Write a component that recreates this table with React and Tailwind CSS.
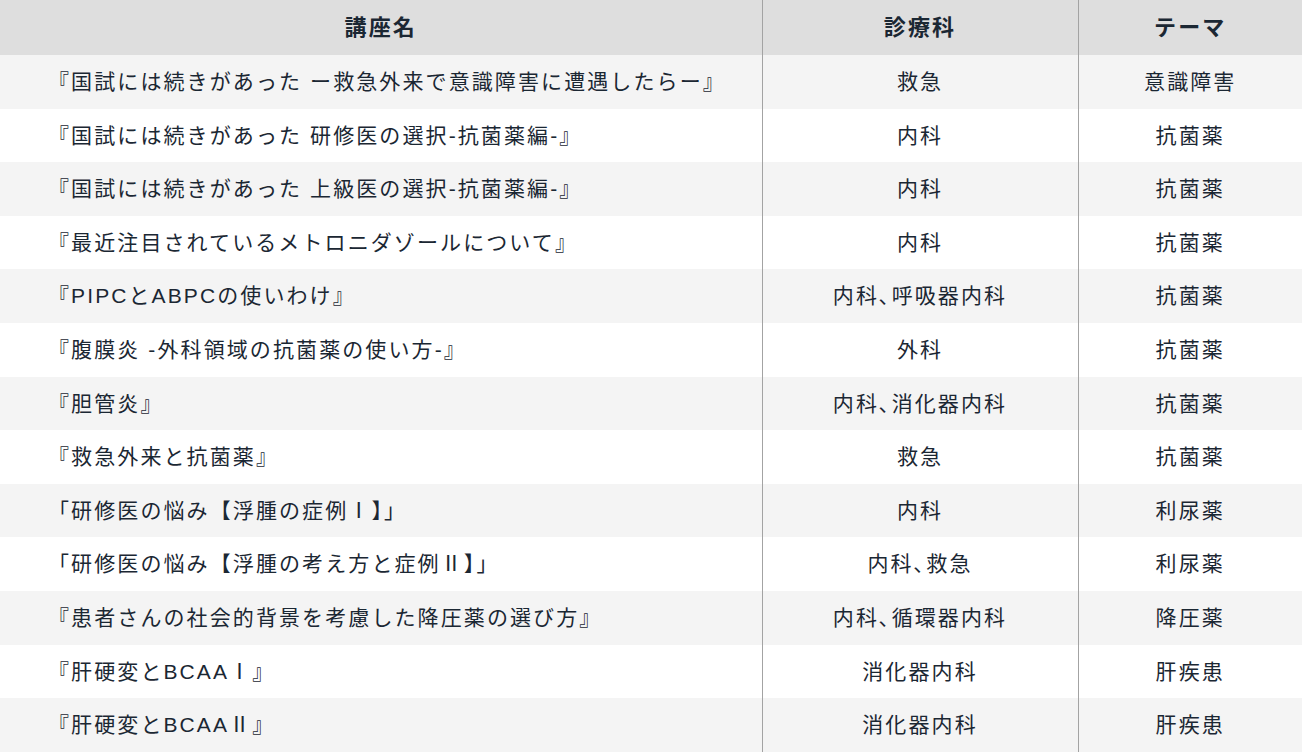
const rows = [
  ['『国試には続きがあった ー救急外来で意識障害に遭遇したらー』', '救急', '意識障害'],
  ['『国試には続きがあった 研修医の選択-抗菌薬編-』', '内科', '抗菌薬'],
  ['『国試には続きがあった 上級医の選択-抗菌薬編-』', '内科', '抗菌薬'],
  ['『最近注目されているメトロニダゾールについて』', '内科', '抗菌薬'],
  ['『PIPCとABPCの使いわけ』', '内科､呼吸器内科', '抗菌薬'],
  ['『腹膜炎 -外科領域の抗菌薬の使い方-』', '外科', '抗菌薬'],
  ['『胆管炎』', '内科､消化器内科', '抗菌薬'],
  ['『救急外来と抗菌薬』', '救急', '抗菌薬'],
  ['「研修医の悩み【浮腫の症例Ⅰ】」', '内科', '利尿薬'],
  ['「研修医の悩み【浮腫の考え方と症例Ⅱ】」', '内科､救急', '利尿薬'],
  ['『患者さんの社会的背景を考慮した降圧薬の選び方』', '内科､循環器内科', '降圧薬'],
  ['『肝硬変とBCAAⅠ』', '消化器内科', '肝疾患'],
  ['『肝硬変とBCAAⅡ』', '消化器内科', '肝疾患'],
];

export default function App() {
  return (
    <div className="w-[1302px] bg-white text-[#1b2733] font-['Liberation_Sans','Noto_Sans_CJK_JP',sans-serif]">
      <table className="w-full table-fixed border-collapse text-[21px] tracking-[0.1em]">
        <colgroup>
          <col className="w-[762px]" />
          <col className="w-[316px]" />
          <col className="w-[224px]" />
        </colgroup>
        <thead>
          <tr className="h-[55px] bg-[#dedede] text-[22px]">
            <th className="font-bold text-center">講座名</th>
            <th className="font-bold text-center border-l border-[#a3a3a3]">診療科</th>
            <th className="font-bold text-center border-l border-[#a3a3a3]">テーマ</th>
          </tr>
        </thead>
        <tbody>
          {rows.map((r, i) => (
            <tr key={i} className={`h-[53.6px] ${i % 2 === 0 ? 'bg-[#f4f4f4]' : 'bg-white'}`}>
              <td className="pl-[48px] text-left whitespace-nowrap">{r[0]}</td>
              <td className="text-center border-l border-[#a3a3a3]">{r[1]}</td>
              <td className="text-center border-l border-[#a3a3a3]">{r[2]}</td>
            </tr>
          ))}
        </tbody>
      </table>
    </div>
  );
}
